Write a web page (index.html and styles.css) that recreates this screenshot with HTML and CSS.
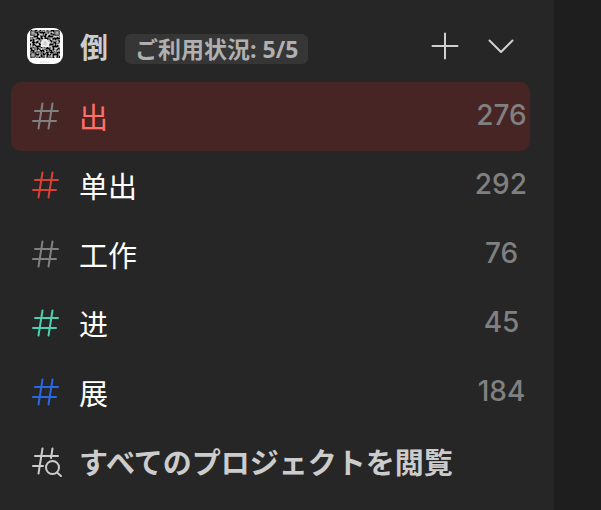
FILE: index.html
```html
<!DOCTYPE html>
<html lang="ja">
<head>
  <meta charset="UTF-8">
  <meta name="viewport" content="width=device-width, initial-scale=1.0">
  <title>Projects</title>
  <link rel="stylesheet" href="styles.css">
</head>
<body>
  <svg width="0" height="0" class="sprite" aria-hidden="true">
    <symbol id="hash" viewBox="0 0 28 28">
      <path d="M11.5 1.5 7.5 26.5M21.5 1.5 17.5 26.5M4 9H27M2 19H25"/>
    </symbol>
  </svg>
  <div class="layout">
    <nav class="sidebar">
      <header class="sidebar-header">
        <svg class="avatar" viewBox="0 0 36 36" aria-hidden="true">
          <filter id="grain" x="0" y="0" width="1" height="1">
            <feTurbulence type="fractalNoise" baseFrequency="0.5" numOctaves="2" seed="4"/>
            <feColorMatrix values="2.4 0 0 0 -1.05  2.4 0 0 0 -1.05  2.4 0 0 0 -1.05  0 0 0 0 1"/>
          </filter>
          <rect width="36" height="36" fill="#fff"/>
          <rect x="3" y="2" width="30" height="28" filter="url(#grain)"/>
          <g fill="#aaa" stroke="#555">
            <rect x="4" y="3" width="4" height="4"/>
            <rect x="28" y="3" width="4" height="4"/>
            <rect x="4" y="25" width="4" height="4"/>
          </g>
          <path d="M14 19v-5l2-3h4l2 3v5z" fill="#eee"/>
          <path d="M17 17v-3h2v3" fill="none" stroke="#bbb"/>
          <path d="M13 34h9" stroke="#ddd"/>
        </svg>
        <h1 class="title">倒</h1>
        <span class="usage">ご利用状況: 5/5</span>
        <div class="actions">
          <button type="button" aria-label="追加">
            <svg viewBox="0 0 28 28"><path d="M14 1.5V26.5M1.5 14H26.5"/></svg>
          </button>
          <button type="button" aria-label="折りたたむ">
            <svg viewBox="0 0 28 28"><path d="M2.5 8.5 14 20 25.5 8.5"/></svg>
          </button>
        </div>
      </header>
      <ul class="projects">
        <li>
          <a href="#" class="project active" aria-current="page">
            <svg class="icon gray"><use href="#hash"/></svg>
            <span class="name" lang="zh">出</span>
            <span class="count">276</span>
          </a>
        </li>
        <li>
          <a href="#" class="project">
            <svg class="icon red"><use href="#hash"/></svg>
            <span class="name" lang="zh">单出</span>
            <span class="count">292</span>
          </a>
        </li>
        <li>
          <a href="#" class="project">
            <svg class="icon gray"><use href="#hash"/></svg>
            <span class="name" lang="zh">工作</span>
            <span class="count">76</span>
          </a>
        </li>
        <li>
          <a href="#" class="project">
            <svg class="icon teal"><use href="#hash"/></svg>
            <span class="name" lang="zh">进</span>
            <span class="count">45</span>
          </a>
        </li>
        <li>
          <a href="#" class="project">
            <svg class="icon blue"><use href="#hash"/></svg>
            <span class="name" lang="zh">展</span>
            <span class="count">184</span>
          </a>
        </li>
        <li>
          <a href="#" class="project browse">
            <svg class="icon" viewBox="0 0 28 28">
              <path d="M11.5 1.5 7.5 26.5M21.5 1.5 20 11M4 9H27M2 19H12"/>
              <circle cx="21.5" cy="20.5" r="6.5"/>
              <path d="M26 25.5 30 29"/>
            </svg>
            <span class="name">すべてのプロジェクトを閲覧</span>
          </a>
        </li>
      </ul>
    </nav>
    <main class="content"></main>
  </div>
</body>
</html>
```

FILE: styles.css
```css
* {
  box-sizing: border-box;
}

body {
  margin: 0;
  background-color: #1e1e1e;
  font-family: "Liberation Sans", "Noto Sans CJK JP", sans-serif;
}

.sprite {
  position: absolute;
}

.layout {
  display: grid;
  grid-template-columns: 1fr 47px;
  min-height: 100vh;
}

.sidebar {
  background-color: #262626;
  padding: 10px 24px 0 11px;
}

svg path,
svg circle {
  stroke-linecap: round;
  stroke-linejoin: round;
}

.sidebar-header {
  display: flex;
  align-items: center;
  height: 72px;
  padding: 0 15px 0 16px;
  gap: 17px;
}

.avatar {
  width: 36px;
  height: 36px;
  border-radius: 9px;
}

.title {
  margin: 0;
  font-family: "Noto Sans CJK SC", sans-serif;
  font-size: 28px;
  line-height: 36px;
  color: #cccccc;
}

.usage {
  padding: 0 10px;
  border-radius: 6px;
  background-color: #363636;
  color: #b0b0b0;
  font-family: "Open Sans", "Noto Sans CJK JP", sans-serif;
  font-size: 23px;
  font-weight: bold;
  line-height: 30px;
  white-space: nowrap;
  margin-top: 6px;
}

.actions {
  display: flex;
  gap: 28px;
  margin-left: auto;
}

.actions button {
  padding: 0;
  border: 0;
  background: none;
  cursor: pointer;
}

.actions svg {
  display: block;
  width: 28px;
  height: 28px;
  fill: none;
  stroke: #d0d0d0;
  stroke-width: 2;
}

.projects {
  list-style: none;
  margin: 0;
  padding: 0;
}

.project {
  display: flex;
  align-items: center;
  height: 69px;
  padding: 0 3px 2px 20px;
  border-radius: 10px;
  color: #ffffff;
  text-decoration: none;
}

.project.active {
  background-color: #472525;
  color: #ff7066;
}

.icon {
  flex: none;
  width: 28px;
  height: 28px;
  margin-right: 20px;
  overflow: visible;
  fill: none;
  stroke: currentColor;
  stroke-width: 2;
}

.gray {
  color: #808080;
}

.red {
  color: #db4035;
}

.teal {
  color: #4dd0b0;
}

.blue {
  color: #2a67e2;
}

.name {
  flex: 1;
  font-family: "Noto Sans CJK SC", sans-serif;
  font-size: 29px;
  line-height: 36px;
}

.count {
  min-width: 51px;
  padding-bottom: 2px;
  color: #808080;
  font-family: Inter, sans-serif;
  font-size: 28px;
  font-weight: 500;
  line-height: 32px;
  text-align: center;
}

.browse {
  color: #cccccc;
}

.browse .name {
  font-family: "Noto Sans CJK JP", sans-serif;
  font-weight: bold;
  white-space: nowrap;
}
```
